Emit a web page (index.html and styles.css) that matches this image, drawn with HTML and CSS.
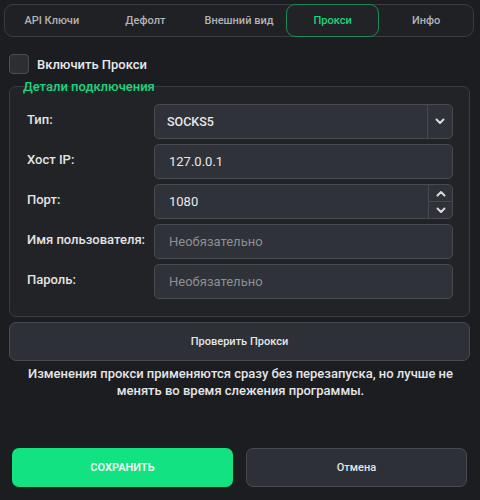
FILE: index.html
```html
<!DOCTYPE html>
<html lang="ru">
<head>
<meta charset="utf-8">
<title>Прокси</title>
<link rel="stylesheet" href="styles.css">
</head>
<body>
<div class="app">
  <nav class="tabs">
    <div class="tab">API Ключи</div>
    <div class="tab">Дефолт</div>
    <div class="tab">Внешний вид</div>
    <div class="tab active">Прокси</div>
    <div class="tab">Инфо</div>
  </nav>

  <div class="page">
    <label class="check-row">
      <span class="checkbox"></span>
      <span class="check-label">Включить Прокси</span>
    </label>

    <div class="group-title">Детали подключения</div>
    <section class="group">
      <div class="form">
        <div class="label">Тип:</div>
        <div class="field combo">
          <span class="value">SOCKS5</span>
          <span class="combo-btn">
            <svg width="10" height="7" viewBox="0 0 10 7"><path d="M1.5 1.5 L5 5 L8.5 1.5" fill="none" stroke="#d8dadd" stroke-width="2" stroke-linecap="round" stroke-linejoin="round"/></svg>
          </span>
        </div>

        <div class="label">Хост IP:</div>
        <div class="field"><span class="value">127.0.0.1</span></div>

        <div class="label">Порт:</div>
        <div class="field spin">
          <span class="value">1080</span>
          <span class="spin-btns">
            <span class="spin-btn">
              <svg width="10" height="7" viewBox="0 0 10 7"><path d="M1.5 5.5 L5 2 L8.5 5.5" fill="none" stroke="#d8dadd" stroke-width="2" stroke-linecap="round" stroke-linejoin="round"/></svg>
            </span>
            <span class="spin-btn">
              <svg width="10" height="7" viewBox="0 0 10 7"><path d="M1.5 1.5 L5 5 L8.5 1.5" fill="none" stroke="#d8dadd" stroke-width="2" stroke-linecap="round" stroke-linejoin="round"/></svg>
            </span>
          </span>
        </div>

        <div class="label">Имя пользователя:</div>
        <div class="field"><span class="value placeholder">Необязательно</span></div>

        <div class="label">Пароль:</div>
        <div class="field"><span class="value placeholder">Необязательно</span></div>
      </div>
    </section>

    <button class="btn check-btn">Проверить Прокси</button>

    <p class="note">Изменения прокси применяются сразу без перезапуска, но лучше не менять во время слежения программы.</p>

    <div class="actions">
      <button class="btn save">СОХРАНИТЬ</button>
      <button class="btn cancel">Отмена</button>
    </div>
  </div>
</div>
</body>
</html>
```

FILE: styles.css
```css
* { box-sizing: border-box; }

html, body {
  margin: 0;
  padding: 0;
  background: #1c1d20;
  width: 480px;
  height: 500px;
  overflow: hidden;
}

body {
  font-family: Roboto, "Noto Sans", "Liberation Sans", sans-serif;
  color: #e4e5e7;
}

.app {
  padding: 4px 0 0 4px;
}

.tabs {
  display: grid;
  grid-template-columns: repeat(5, 1fr);
  width: 470px;
  height: 33px;
  border: 1px solid #3a3c41;
  border-radius: 9px;
  background: #202124;
}

.tab {
  display: flex;
  align-items: center;
  justify-content: center;
  font-size: 11px;
  font-weight: 500;
  color: #b2b4b8;
  margin: -1px 0;
}

.tab.active {
  border: 1px solid #1f8a55;
  border-radius: 9px;
  color: #17d67f;
  background: #222326;
}

.page {
  padding: 0 10px 0 5px;
}

.check-row {
  display: flex;
  align-items: center;
  gap: 8px;
  margin-top: 17px;
  height: 20px;
}

.checkbox {
  width: 20px;
  height: 20px;
  border: 1px solid #4a4d54;
  border-radius: 4px;
  background: #2b2e33;
}

.check-label {
  font-size: 13px;
  font-weight: 500;
  color: #e8e9eb;
}

.group-title {
  position: relative;
  z-index: 1;
  margin: 5px 0 -8px 14px;
  font-size: 13px;
  font-weight: 500;
  color: #17d67f;
  line-height: 15px;
  height: 15px;
}

.group {
  border: 1px solid #3a3c41;
  border-radius: 7px;
  background: #222326;
  padding: 17px 16px 17px 17px;
}

.form {
  display: grid;
  grid-template-columns: 127px 1fr;
  row-gap: 5px;
}

.label {
  display: flex;
  align-items: center;
  font-size: 13px;
  font-weight: 500;
  color: #e2e3e5;
  margin-top: -4px;
}

.field {
  display: flex;
  align-items: center;
  height: 35px;
  border: 1px solid #474a51;
  border-radius: 5px;
  background: #2f3238;
  overflow: hidden;
}

.value {
  flex: 1;
  padding-left: 14px;
  font-size: 13px;
  color: #e8e9eb;
}

.combo .value {
  padding-left: 12px;
  font-size: 12.5px;
  font-weight: 500;
}

.placeholder {
  color: #8b8e93;
}

.combo-btn {
  width: 25px;
  align-self: stretch;
  border-left: 1px solid #474a51;
  display: flex;
  align-items: center;
  justify-content: center;
}

.spin-btns {
  width: 24px;
  align-self: stretch;
  border-left: 1px solid #474a51;
  display: flex;
  flex-direction: column;
}

.spin-btn {
  flex: 1;
  display: flex;
  align-items: center;
  justify-content: center;
}

.spin-btn + .spin-btn {
  border-top: 1px solid #474a51;
}

.btn {
  font-family: Roboto, "Noto Sans", "Liberation Sans", sans-serif;
  font-size: 11px;
  font-weight: 500;
  border-radius: 7px;
  cursor: pointer;
}

.check-btn {
  display: block;
  width: 461px;
  height: 39px;
  margin-top: 5px;
  border: 1px solid #474a51;
  background: #2d3036;
  color: #e4e5e7;
}

.note {
  margin: 4px 0 0;
  text-align: center;
  font-size: 13px;
  font-weight: 500;
  line-height: 17px;
  color: #e4e5e7;
  padding: 0 12px 0 14px;
}

.actions {
  display: grid;
  grid-template-columns: 221px 221px;
  column-gap: 13px;
  margin-top: 49px;
  padding-left: 3px;
}

.save {
  height: 39px;
  border: none;
  background: #13e280;
  color: #e9f3ee;
  font-weight: 700;
}

.cancel {
  height: 39px;
  border: 1px solid #474a51;
  background: #2d3036;
  color: #e4e5e7;
}
```
